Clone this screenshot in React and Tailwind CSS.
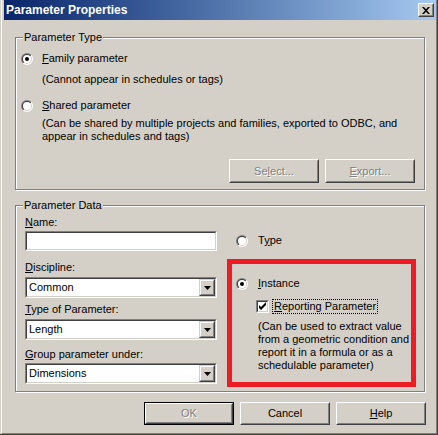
import React from "react";

const FONT = { fontFamily: '"Liberation Sans", Arial, sans-serif' };

function Radio({ id, checked }) {
  return (
    <svg width="12" height="12" viewBox="0 0 12 12" className="shrink-0">
      <defs>
        <linearGradient id={`${id}o`} x1="0" y1="0" x2="1" y2="1">
          <stop offset="0.5" stopColor="#808080" />
          <stop offset="0.5" stopColor="#ffffff" />
        </linearGradient>
        <linearGradient id={`${id}i`} x1="0" y1="0" x2="1" y2="1">
          <stop offset="0.5" stopColor="#404040" />
          <stop offset="0.5" stopColor="#d4d0c8" />
        </linearGradient>
      </defs>
      <circle cx="6" cy="6" r="6" fill={`url(#${id}o)`} />
      <circle cx="6" cy="6" r="5" fill={`url(#${id}i)`} />
      <circle cx="6" cy="6" r="4" fill="#fff" />
      {checked && <circle cx="6" cy="6" r="2" fill="#000" />}
    </svg>
  );
}

function Checkbox() {
  return (
    <div className="w-[13px] h-[13px] shrink-0 border border-t-[#808080] border-l-[#808080] border-b-white border-r-white">
      <div className="w-full h-full bg-white border border-t-[#404040] border-l-[#404040] border-b-[#d4d0c8] border-r-[#d4d0c8]">
        <svg width="9" height="9" viewBox="0 0 9 9">
          <polygon points="1,3 3,5 8,0 8,3 3,8 1,6" fill="#000" />
        </svg>
      </div>
    </div>
  );
}

function Sunken({ className = "", children }) {
  return (
    <div className={`border border-t-[#808080] border-l-[#808080] border-b-white border-r-white ${className}`}>
      <div className="flex w-full h-full bg-white border border-t-[#404040] border-l-[#404040] border-b-[#d4d0c8] border-r-[#d4d0c8]">
        {children}
      </div>
    </div>
  );
}

function Combo({ value }) {
  return (
    <Sunken className="w-[192px] h-[21px]">
      <span className="flex-1 pl-[2px] leading-[17px]">{value}</span>
      <div className="w-[16px] h-full border border-t-[#d4d0c8] border-l-[#d4d0c8] border-b-[#404040] border-r-[#404040] bg-[#d4d0c8]">
        <div className="w-full h-full flex items-center justify-center border border-t-white border-l-white border-b-[#808080] border-r-[#808080]">
          <svg width="7" height="4" viewBox="0 0 7 4">
            <polygon points="0,0 7,0 3.5,4" fill="#000" />
          </svg>
        </div>
      </div>
    </Sunken>
  );
}

function Button({ children, def, disabled, className = "" }) {
  return (
    <div className={`w-[90px] h-[23px] ${def ? "border border-black" : ""} ${className}`}>
      <div className="w-full h-full border border-t-white border-l-white border-b-[#404040] border-r-[#404040]">
        <div
          className={`w-full h-full flex items-center justify-center border border-t-[#d4d0c8] border-l-[#d4d0c8] border-b-[#808080] border-r-[#808080] ${
            disabled ? "text-[#808080] [text-shadow:1px_1px_0_#fff]" : "text-black"
          }`}
        >
          {children}
        </div>
      </div>
    </div>
  );
}

function Group({ label, className = "", children }) {
  return (
    <div
      className={`relative mx-[11px] border border-[#808080] shadow-[1px_1px_0_#fff,inset_1px_1px_0_#fff] ${className}`}
    >
      <span className="absolute -top-[7px] left-[7px] px-[1px] bg-[#d4d0c8] leading-[13px]">
        {label}
      </span>
      {children}
    </div>
  );
}

const U = ({ children }) => <span className="underline underline-offset-[1px]">{children}</span>;

export default function App() {
  return (
    <div
      className="w-[438px] h-[435px] bg-[#d4d0c8] border-r border-b border-[#404040] pl-[1px] text-[11px] leading-[13px] text-black select-none"
      style={FONT}
    >
      <div className="h-full flex flex-col border-l border-l-white border-r border-r-[#808080] border-b border-b-[#808080] pl-[2px]">
        {/* Title bar */}
        <div className="h-[20px] flex items-center justify-between bg-gradient-to-r from-[#0a246a] to-[#a6caf0] pl-[2px] pr-[2px]">
          <span className="font-bold text-white text-[12px] pt-[1px]">Parameter Properties</span>
          <div className="w-[16px] h-[14px] border border-t-white border-l-white border-b-[#404040] border-r-[#404040] bg-[#d4d0c8]">
            <div className="w-full h-full flex items-center justify-center border border-t-[#d4d0c8] border-l-[#d4d0c8] border-b-[#808080] border-r-[#808080]">
              <svg width="8" height="7" viewBox="0 0 8 7">
                <path d="M0 0h2l2 2.2L6 0h2L5 3.5 8 7H6L4 4.8 2 7H0l3-3.5z" fill="#000" />
              </svg>
            </div>
          </div>
        </div>

        {/* Parameter Type */}
        <Group label="Parameter Type" className="mt-[17px] h-[153px]">
          <div className="mt-[14px] pl-[5px] flex items-center gap-[9px] h-[13px]">
            <Radio id="rf" checked />
            <span>
              <U>F</U>amily parameter
            </span>
          </div>
          <div className="mt-[8px] pl-[26px]">(Cannot appear in schedules or tags)</div>
          <div className="mt-[13px] pl-[5px] flex items-center gap-[9px] h-[13px]">
            <Radio id="rs" />
            <span>
              <U>S</U>hared parameter
            </span>
          </div>
          <div className="mt-[5px] pl-[26px] whitespace-nowrap">
            (Can be shared by multiple projects and families, exported to ODBC, and
            <br />
            appear in schedules and tags)
          </div>
          <div className="mt-[16px] pr-[9px] flex justify-end gap-[6px]">
            <Button disabled className="h-[24px]">
              Se<U>l</U>ect...
            </Button>
            <Button disabled className="h-[24px]">
              <U>E</U>xport...
            </Button>
          </div>
        </Group>

        {/* Parameter Data */}
        <Group label="Parameter Data" className="mt-[15px] h-[187px] flex">
          <div className="pl-[9px] w-[201px] flex flex-col">
            <div className="mt-[10px]">
              <U>N</U>ame:
            </div>
            <Sunken className="mt-[2px] w-[192px] h-[20px]" />
            <div className="mt-[10px]">
              <U>D</U>iscipline:
            </div>
            <div className="mt-[3px]">
              <Combo value="Common" />
            </div>
            <div className="mt-[5px]">
              <U>T</U>ype of Parameter:
            </div>
            <div className="mt-[3px]">
              <Combo value="Length" />
            </div>
            <div className="mt-[8px]">
              <U>G</U>roup parameter under:
            </div>
            <div className="mt-[2px]">
              <Combo value="Dimensions" />
            </div>
          </div>

          <div className="ml-[10px] flex flex-col">
            <div className="mt-[28px] pl-[9px] flex items-center gap-[10px] h-[13px]">
              <Radio id="rt" />
              <span>
                T<U>y</U>pe
              </span>
            </div>
            <div className="mt-[12px] w-[189px] h-[128px] border-[5px] border-[#ed1c24]">
              <div className="mt-[13px] pl-[4px] flex items-center gap-[10px] h-[13px]">
                <Radio id="ri" checked />
                <span>
                  <U>I</U>nstance
                </span>
              </div>
              <div className="mt-[10px] pl-[24px] flex items-center gap-[4px] h-[13px]">
                <Checkbox />
                <span className="outline outline-1 outline-dotted outline-black px-[1px]">
                  <U>R</U>eporting Parameter
                </span>
              </div>
              <div className="mt-[7px] pl-[26px] whitespace-nowrap">
                (Can be used to extract value
                <br />
                from a geometric condition and
                <br />
                report it in a formula or as a
                <br />
                schedulable parameter)
              </div>
            </div>
          </div>
        </Group>

        {/* Dialog buttons */}
        <div className="mt-[10px] pr-[10px] flex justify-end gap-[6px]">
          <Button def disabled>
            OK
          </Button>
          <Button>Cancel</Button>
          <Button>
            <U>H</U>elp
          </Button>
        </div>
      </div>
    </div>
  );
}
